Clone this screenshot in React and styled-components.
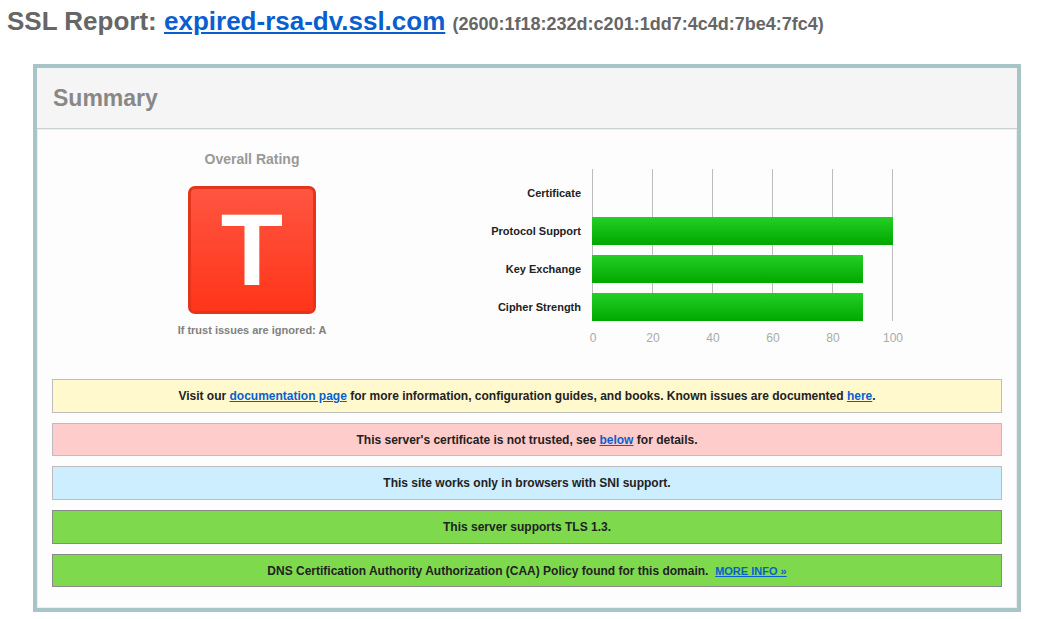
import React from "react";
import styled, { createGlobalStyle } from "styled-components";

const Global = createGlobalStyle`
  html, body { margin: 0; padding: 0; background: #fff; }
  body { font-family: "Liberation Sans", Arial, sans-serif; }
`;

const Page = styled.div`
  padding: 6px 0 20px 7px;
`;

const Title = styled.h1`
  margin: 0;
  font-size: 26px;
  line-height: 30px;
  font-weight: bold;
  color: #666;
  white-space: nowrap;
`;

const TitleLink = styled.a`
  color: #0a5fd0;
  text-decoration: underline;
`;

const Ip = styled.span`
  font-size: 18px;
  color: #666;
`;

const Panel = styled.div`
  box-sizing: border-box;
  width: 988px;
  margin: 25px 0 0 26px;
  border: 4px solid #a7c4c7;
  background: #fdfdfd;
`;

const PanelHeader = styled.div`
  height: 60px;
  display: flex;
  align-items: center;
  padding: 0 16px;
  background: #f5f5f5;
  border-bottom: 1px solid #c9d2d2;
  font-size: 23px;
  font-weight: bold;
  color: #888;
`;

const PanelBody = styled.div`
  padding: 20px 15px 21px;
  box-shadow: inset 0 0 0 1px #eeeeee;
`;

const TopRow = styled.div`
  display: flex;
  height: 220px;
`;

const RatingCol = styled.div`
  width: 400px;
  display: flex;
  flex-direction: column;
  align-items: center;
`;

const RatingLabel = styled.div`
  margin-top: 2px;
  font-size: 14px;
  line-height: 16px;
  font-weight: bold;
  color: #999;
`;

const Grade = styled.div`
  box-sizing: border-box;
  margin-top: 19px;
  width: 128px;
  height: 128px;
  border: 3px solid #e3341c;
  border-radius: 7px;
  background: linear-gradient(#ff5541, #ff3519);
  display: flex;
  align-items: center;
  justify-content: center;
  color: #fff;
  font-size: 102px;
  font-weight: bold;
  line-height: 1;
`;

const GradeNote = styled.div`
  margin-top: 9px;
  font-size: 11px;
  line-height: 14px;
  font-weight: bold;
  color: #808080;
`;

const ChartSvg = styled.svg`
  display: block;
  overflow: visible;
`;

const Messages = styled.div`
  margin-top: 10px;
  display: flex;
  flex-direction: column;
  gap: 10px;
`;

const tones = {
  warn: { bg: "#fff9cd", border: "#bdbdbd" },
  error: { bg: "#ffcccc", border: "#bdbdbd" },
  info: { bg: "#cdeeff", border: "#bdbdbd" },
  good: { bg: "#7ed94d", border: "#8a8a8a" },
};

const Message = styled.div`
  box-sizing: border-box;
  height: 33.7px;
  display: flex;
  align-items: center;
  justify-content: center;
  background: ${(p) => tones[p.$tone].bg};
  border: 1px solid ${(p) => tones[p.$tone].border};
  font-size: 12px;
  font-weight: bold;
  color: #222;
  white-space: pre;
`;

const MsgLink = styled.a`
  color: #0a5fd0;
  text-decoration: underline;
`;

const SmallLink = styled.a`
  color: #0a5fd0;
  text-decoration: underline;
  font-size: 11px;
`;

const rows = [
  { label: "Certificate", value: 0 },
  { label: "Protocol Support", value: 100 },
  { label: "Key Exchange", value: 90 },
  { label: "Cipher Strength", value: 90 },
];

function Chart() {
  const x0 = 140;
  const scale = 3;
  const gridTop = 20;
  const gridBottom = 172;
  return (
    <ChartSvg width="470" height="200" viewBox="0 0 470 200">
      <defs>
        <linearGradient id="barG" x1="0" y1="0" x2="0" y2="1">
          <stop offset="0" stopColor="#25cf25" />
          <stop offset="1" stopColor="#00a800" />
        </linearGradient>
      </defs>
      {[0, 20, 40, 60, 80, 100].map((v) => (
        <g key={v}>
          <line
            x1={x0 + v * scale + 0.5}
            x2={x0 + v * scale + 0.5}
            y1={gridTop}
            y2={gridBottom}
            stroke="#bdbdbd"
            strokeWidth="1"
          />
          <text
            x={x0 + v * scale + 1}
            y={193}
            textAnchor="middle"
            fontSize="12"
            fill="#aaa"
            fontFamily="Liberation Sans, Arial, sans-serif"
          >
            {v}
          </text>
        </g>
      ))}
      {rows.map((r, i) => {
        const top = 30 + i * 38;
        return (
          <g key={r.label}>
            {r.value > 0 && (
              <rect x={x0} y={top} width={r.value * scale + 1} height={28} fill="url(#barG)" />
            )}
            <text
              x={129}
              y={top + 18}
              textAnchor="end"
              fontSize="11"
              fontWeight="bold"
              fill="#222"
              fontFamily="Liberation Sans, Arial, sans-serif"
            >
              {r.label}
            </text>
          </g>
        );
      })}
    </ChartSvg>
  );
}

export default function App() {
  return (
    <>
      <Global />
      <Page>
        <Title>
          SSL Report: <TitleLink href="#">expired-rsa-dv.ssl.com</TitleLink>{" "}
          <Ip>(2600:1f18:232d:c201:1dd7:4c4d:7be4:7fc4)</Ip>
        </Title>
        <Panel>
          <PanelHeader>Summary</PanelHeader>
          <PanelBody>
            <TopRow>
              <RatingCol>
                <RatingLabel>Overall Rating</RatingLabel>
                <Grade>T</Grade>
                <GradeNote>If trust issues are ignored: A</GradeNote>
              </RatingCol>
              <Chart />
            </TopRow>
            <Messages>
              <Message $tone="warn">
                Visit our <MsgLink href="#">documentation page</MsgLink> for more information, configuration guides, and books. Known issues are documented <MsgLink href="#">here</MsgLink>.
              </Message>
              <Message $tone="error">
                This server's certificate is not trusted, see <MsgLink href="#">below</MsgLink> for details.
              </Message>
              <Message $tone="info">This site works only in browsers with SNI support.</Message>
              <Message $tone="good">This server supports TLS 1.3.</Message>
              <Message $tone="good">
                DNS Certification Authority Authorization (CAA) Policy found for this domain.{"  "}
                <SmallLink href="#">MORE INFO »</SmallLink>
              </Message>
            </Messages>
          </PanelBody>
        </Panel>
      </Page>
    </>
  );
}
